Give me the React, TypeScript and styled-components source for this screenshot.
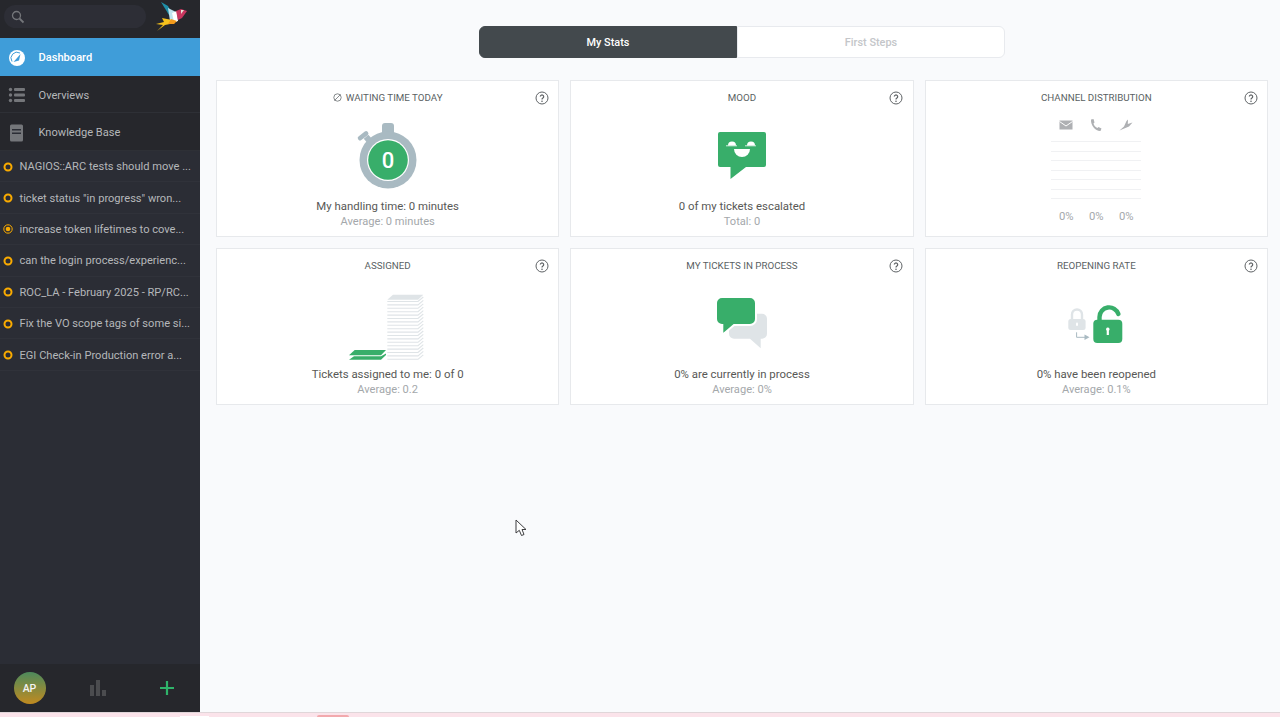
import React from "react";
import styled, { createGlobalStyle } from "styled-components";

const Global = createGlobalStyle`
  html, body { margin: 0; padding: 0; height: 717px; overflow: hidden; }
  body { font-family: "Roboto", "Noto Sans", sans-serif; font-size: 12px; }
  * { box-sizing: border-box; }
`;

const Page = styled.div`
  position: relative;
  width: 1280px;
  height: 717px;
  display: flex;
  flex-direction: column;
  overflow: hidden;
`;
const Body = styled.div`
  display: flex;
  height: 712px;
`;
const Strip = styled.div`
  position: relative;
  height: 5px;
  background: #fbe3ea;
  border-top: 1px solid #e0d6d9;
`;
const StripTabLight = styled.span`
  position: absolute;
  left: 180px;
  bottom: 0;
  width: 29px;
  height: 1px;
  background: #fff;
`;
const StripTabRed = styled.span`
  position: absolute;
  left: 317px;
  bottom: 0;
  width: 32px;
  height: 2px;
  border-radius: 2px 2px 0 0;
  background: #f2a9ad;
`;

const Sidebar = styled.aside`
  width: 200px;
  flex: none;
  display: flex;
  flex-direction: column;
  background: #2b2d35;
`;
const SearchRow = styled.div`
  height: 38px;
  flex: none;
  display: flex;
  align-items: flex-start;
  justify-content: space-between;
  background: #26272c;
  padding: 5px 13px 0 4px;
`;
const SearchBox = styled.div`
  width: 142px;
  height: 23px;
  border-radius: 12px;
  background: #2d2e36;
  display: flex;
  align-items: center;
  padding-left: 7px;
`;
const Logo = styled.svg`
  width: 32px;
  height: 30px;
  margin-top: -4px;
`;
const NavItem = styled.div<{ $active?: boolean; $h: number }>`
  height: ${(p) => p.$h}px;
  flex: none;
  display: flex;
  align-items: center;
  gap: 12.5px;
  padding: 2px 0 0 8px;
  font-size: 11.1px;
  font-weight: ${(p) => (p.$active ? 500 : 400)};
  color: ${(p) => (p.$active ? "#ffffff" : "#b5b7ba")};
  background: ${(p) => (p.$active ? "#3f9dd9" : "#26272c")};
  border-bottom: 1px solid ${(p) => (p.$active ? "#3f9dd9" : "#2e3036")};
`;
const NavIcon = styled.svg`
  width: 18px;
  height: 18px;
  flex: none;
`;
const TicketList = styled.div`
  flex: 1;
  display: flex;
  flex-direction: column;
`;
const TicketRow = styled.div`
  height: 31.4px;
  flex: none;
  display: flex;
  align-items: center;
  gap: 6.5px;
  padding: 1px 0 0 3px;
  border-bottom: 1px solid #30323a;
  color: #b5b7ba;
  font-size: 11.1px;
  white-space: nowrap;
  overflow: hidden;
`;
const TicketDot = styled.svg`
  width: 10px;
  height: 10px;
  flex: none;
`;
const SideFooter = styled.div`
  height: 48px;
  flex: none;
  background: #26272c;
  display: grid;
  grid-template-columns: 59px 77px 62px;
  align-items: center;
  justify-items: center;
`;
const Avatar = styled.div`
  width: 32px;
  height: 32px;
  border-radius: 50%;
  background: linear-gradient(180deg, #4d8a5c 0%, #c08a20 100%);
  color: #f4f4f4;
  font-size: 10.5px;
  font-weight: 500;
  display: flex;
  align-items: center;
  justify-content: center;
`;
const FootIcon = styled.svg`
  width: 18px;
  height: 18px;
`;

const Main = styled.main`
  flex: 1;
  background: #f9fafc;
  padding: 26px 12px 0 16px;
  display: flex;
  flex-direction: column;
  align-items: center;
`;
const Tabs = styled.div`
  width: 526px;
  height: 32px;
  display: grid;
  grid-template-columns: 258px 1fr;
  margin-bottom: 22px;
`;
const Tab = styled.div<{ $active?: boolean }>`
  display: flex;
  align-items: center;
  justify-content: center;
  font-size: 10.9px;
  font-weight: 500;
  color: ${(p) => (p.$active ? "#ffffff" : "#c4c6c9")};
  background: ${(p) => (p.$active ? "#43494d" : "#ffffff")};
  border: 1px solid ${(p) => (p.$active ? "#43494d" : "#e8eaee")};
  border-radius: ${(p) => (p.$active ? "6px 0 0 6px" : "0 6px 6px 0")};
`;
const Grid = styled.div`
  width: 100%;
  display: grid;
  grid-template-columns: repeat(3, 1fr);
  grid-auto-rows: 157px;
  gap: 11px;
`;
const Card = styled.section`
  position: relative;
  background: #fff;
  border: 1px solid #e7e9ec;
  display: flex;
  flex-direction: column;
  align-items: center;
  padding-bottom: 7px;
`;
const Title = styled.h3`
  margin: 0;
  height: 35px;
  padding-bottom: 2px;
  flex: none;
  display: flex;
  align-items: center;
  gap: 4px;
  font-size: 9.75px;
  font-weight: 400;
  color: #5a5f63;
  text-transform: uppercase;
`;
const Help = styled.svg`
  position: absolute;
  top: 9.5px;
  right: 9.5px;
  width: 14px;
  height: 14px;
`;
const Visual = styled.svg`
  width: 120px;
  height: 82px;
  flex: none;
`;
const Primary = styled.div`
  height: 16px;
  line-height: 16px;
  font-size: 11.4px;
  color: #585856;
`;
const Secondary = styled.div`
  height: 15px;
  line-height: 15px;
  font-size: 11.1px;
  color: #a4a8ab;
`;
const Channels = styled.div`
  width: 90px;
  height: 113px;
  padding-top: 1px;
  flex: none;
  display: flex;
  flex-direction: column;
`;
const ChannelRow = styled.div`
  display: grid;
  grid-template-columns: repeat(3, 30px);
  justify-items: center;
`;
const ChannelIcon = styled.svg`
  width: 16px;
  height: 16px;
`;
const Lines = styled.div`
  margin-top: 8px;
  height: 58px;
  display: flex;
  flex-direction: column;
  justify-content: space-between;
  margin-bottom: 10px;
`;
const Line = styled.div`
  height: 1px;
  background: #f0f1f3;
`;
const Percent = styled.div`
  font-size: 11.3px;
  line-height: 16px;
  color: #a4a8ab;
`;
const Cursor = styled.svg`
  position: absolute;
  left: 515px;
  top: 519px;
  width: 12px;
  height: 18px;
`;

const HelpIcon = () => (
  <Help viewBox="0 0 14 14">
    <circle cx="7" cy="7" r="6" fill="none" stroke="#5f6366" strokeWidth="1" />
    <path d="M5.3 5.6a1.7 1.7 0 1 1 2.6 1.5c-.6.4-.9.6-.9 1.3" fill="none" stroke="#5f6366" strokeWidth="1.2" />
    <circle cx="7" cy="10.2" r=".8" fill="#5f6366" />
  </Help>
);

const green = "#38ae6a";
const pale = "#dfe4e7";

const Stopwatch = () => (
  <Visual viewBox="0 0 120 82">
    <rect x="54" y="7" width="12" height="12" rx="3" fill="#a9bac2" />
    <rect x="29" y="17.5" width="12" height="4.6" rx="2" fill="#a9bac2" transform="rotate(-38 35 19.7)" />
    <rect x="37" y="20" width="6" height="6" fill="#a9bac2" transform="rotate(-40 40 23)" />
    <circle cx="60" cy="44" r="28.5" fill="#a9bac2" />
    <circle cx="60" cy="44" r="21" fill="#fff" />
    <circle cx="60" cy="44" r="19.8" fill={green} />
    <text x="60" y="51.5" textAnchor="middle" fontSize="22" fontWeight="500" fill="#fff" fontFamily="Roboto, sans-serif">0</text>
  </Visual>
);

const Mood = () => (
  <Visual viewBox="0 0 120 82">
    <path d="M38 16H82a2 2 0 0 1 2 2V49a2 2 0 0 1-2 2H64L48.500 63V51H38a2 2 0 0 1-2-2V18a2 2 0 0 1 2-2Z" fill={green} />
    <path d="M46 29.500a4 4 0 0 1 8 0Z M65 29.500a4 4 0 0 1 8 0Z" fill="#fff" />
    <path d="M44 29.800H55 M63 29.800H74" stroke="#fff" strokeWidth=".8" />
    <path d="M52 33H68a8 8 0 0 1-16 0Z" fill="#fff" />
  </Visual>
);

const sheets = Array.from({ length: 18 }, (_, i) => 17.5 + i * 3.4);

const Assigned = () => (
  <Visual viewBox="0 0 120 82">
    <polygon points="59.300,15.700 65,10.700 95.300,10.700 90,15.700" fill={pale} />
    {sheets.map((y) => (
      <path key={y} d={`M59.300 ${y}H90L95.300 ${y - 4.500}`} fill="none" stroke={pale} strokeWidth="1.100" />
    ))}
    <polygon points="21,71.300 26.700,66 58,66 53,71.300" fill={green} />
    <polygon points="21,75.700 26,72.200 28,72.200 28,72.300 53,72.300 58,69.500 58,71 53,75.700" fill={green} />
  </Visual>
);

const Process = () => (
  <Visual viewBox="0 0 120 82">
    <path d="M53 29.700H80a5 5 0 0 1 5 5V49.700a5 5 0 0 1-5 5H78.700V64.300L68 54.700H52a5 5 0 0 1-5-5V35a5 5 0 0 1 6-5.300Z" fill={pale} />
    <path d="M40 13H68a6 6 0 0 1 6 6V35a6 6 0 0 1-6 6H52L40.300 51V41H40a6 6 0 0 1-6-6V19a6 6 0 0 1 6-6Z" fill={green} stroke="#fff" strokeWidth="2" />
  </Visual>
);

const Reopen = () => (
  <Visual viewBox="0 0 120 82">
    <rect x="32.300" y="35" width="17.300" height="11" rx="2.500" fill={pale} />
    <path d="M36 36V30.500a5 5 0 0 1 10 0V36" fill="none" stroke={pale} strokeWidth="2.400" />
    <rect x="40" y="38.500" width="2" height="3.500" rx="1" fill="#fff" />
    <path d="M40.600 48.300V53.300H52" fill="none" stroke="#a9bac2" strokeWidth="1" />
    <path d="M48.500 50.500L53.500 53.300L48.500 56Z" fill="#a9bac2" />
    <rect x="57.300" y="35.700" width="29" height="23.300" rx="4" fill={green} />
    <path d="M63.500 38V33A9.700 9.700 0 0 1 82.400 30" fill="none" stroke={green} strokeWidth="4.400" strokeLinecap="round" />
    <path d="M71.800 43.500a1.800 1.800 0 0 1 1.100 3.200V51h-2.200v-4.300a1.800 1.800 0 0 1 1.100-3.200Z" fill="#fff" />
  </Visual>
);

const tickets = [
  "NAGIOS::ARC tests should move ...",
  'ticket status "in progress" wron...',
  "increase token lifetimes to cove...",
  "can the login process/experienc...",
  "ROC_LA - February 2025 - RP/RC...",
  "Fix the VO scope tags of some si...",
  "EGI Check-in Production error a...",
];

export default function App() {
  return (
    <>
      <Global />
      <Page>
        <Body>
          <Sidebar>
            <SearchRow>
              <SearchBox>
                <svg width="14" height="14" viewBox="0 0 14 14">
                  <circle cx="5.500" cy="5.500" r="4" fill="none" stroke="#74767a" strokeWidth="1.300" />
                  <path d="M8.500 8.500L12.500 12.500" stroke="#74767a" strokeWidth="1.800" />
                </svg>
              </SearchBox>
              <Logo viewBox="0 0 32 30">
                <polygon points="6,1 13,5 17,13 14,14" fill="#1f8fa8" />
                <polygon points="13,7 21,11 22,21 15,20" fill="#bfe3ee" />
                <polygon points="17,12 22,10 23,20 19,21" fill="#ffffff" />
                <polygon points="21,10 26,8 32,10 27,17 23,19" fill="#c8365f" />
                <polygon points="26,9 29,9 26,13" fill="#e8e4d8" />
                <polygon points="7,17 17,19 20,22 10,24 2,30 8,24 1,23 9,21" fill="#f6c21c" />
                <polygon points="16,18 22,20 19,23 13,23" fill="#f29a1c" />
              </Logo>
            </SearchRow>
            <NavItem $active $h={38}>
              <NavIcon viewBox="0 0 18 18">
                <circle cx="9" cy="9" r="8" fill="#fff" />
                <path d="M4 12.500A6 6 0 0 1 12 4" fill="none" stroke="#3f9dd9" strokeWidth="1" />
                <path d="M5.500 13L12.500 5 11 11.500Z" fill="#3f9dd9" />
              </NavIcon>
              Dashboard
            </NavItem>
            <NavItem $h={37}>
              <NavIcon viewBox="0 0 18 18">
                <g fill="#74767a">
                  <circle cx="2.500" cy="3.500" r="1.700" />
                  <circle cx="2.500" cy="9" r="1.700" />
                  <circle cx="2.500" cy="14.500" r="1.700" />
                  <rect x="6" y="2" width="11" height="3" rx="1" />
                  <rect x="6" y="7.500" width="11" height="3" rx="1" />
                  <rect x="6" y="13" width="11" height="3" rx="1" />
                </g>
              </NavIcon>
              Overviews
            </NavItem>
            <NavItem $h={38}>
              <NavIcon viewBox="0 0 18 18">
                <rect x="2" y="0.500" width="13" height="17" rx="1.500" fill="#74767a" />
                <rect x="4" y="5" width="9" height="1.500" fill="#2b2d35" />
                <rect x="4" y="8.500" width="9" height="1.500" fill="#2b2d35" />
              </NavIcon>
              Knowledge Base
            </NavItem>
            <TicketList>
              {tickets.map((t, i) => (
                <TicketRow key={t}>
                  <TicketDot viewBox="0 0 10 10">
                    {i === 2 ? (
                      <>
                        <circle cx="5" cy="5" r="4.200" fill="none" stroke="#faab00" strokeWidth="1" />
                        <circle cx="5" cy="5" r="2.300" fill="#faab00" />
                      </>
                    ) : (
                      <circle cx="5" cy="5" r="3.500" fill="none" stroke="#faab00" strokeWidth="2" />
                    )}
                  </TicketDot>
                  {t}
                </TicketRow>
              ))}
            </TicketList>
            <SideFooter>
              <Avatar>AP</Avatar>
              <FootIcon viewBox="0 0 18 18">
                <g fill="#4b4c4f">
                  <rect x="1" y="6" width="4" height="11" />
                  <rect x="7" y="1" width="4" height="16" />
                  <rect x="13" y="11" width="4" height="6" />
                </g>
              </FootIcon>
              <FootIcon viewBox="0 0 18 18">
                <path d="M9 2V16M2 9H16" stroke="#2fb36a" strokeWidth="2.200" />
              </FootIcon>
            </SideFooter>
          </Sidebar>
          <Main>
            <Tabs>
              <Tab $active>My Stats</Tab>
              <Tab>First Steps</Tab>
            </Tabs>
            <Grid>
              <Card>
                <Title>
                  <svg width="9" height="9" viewBox="0 0 9 9">
                    <circle cx="4.500" cy="4.500" r="3.700" fill="none" stroke="#6a6e71" strokeWidth=".8" />
                    <path d="M1.500 7.500L7.500 1.500" stroke="#6a6e71" strokeWidth=".8" />
                  </svg>
                  Waiting time today
                </Title>
                <HelpIcon />
                <Stopwatch />
                <Primary>My handling time: 0 minutes</Primary>
                <Secondary>Average: 0 minutes</Secondary>
              </Card>
              <Card>
                <Title>Mood</Title>
                <HelpIcon />
                <Mood />
                <Primary>0 of my tickets escalated</Primary>
                <Secondary>Total: 0</Secondary>
              </Card>
              <Card>
                <Title>Channel Distribution</Title>
                <HelpIcon />
                <Channels>
                  <ChannelRow>
                    <ChannelIcon viewBox="0 0 16 16">
                      <rect x="1.500" y="3.500" width="13" height="9" fill="#aeb0b3" />
                      <path d="M1.500 4.500L8 9L14.500 4.500" fill="none" stroke="#fff" strokeWidth="1" />
                    </ChannelIcon>
                    <ChannelIcon viewBox="0 0 16 16">
                      <path d="M3 2.500L5.500 2L6.500 5.500L5.500 6.500C6 8.500 7.500 10 9.500 11L10.500 10L13.500 11.500L12.500 14C8 14.500 2.500 8.500 3 2.500Z" fill="#aeb0b3" />
                    </ChannelIcon>
                    <ChannelIcon viewBox="0 0 16 16">
                      <path d="M1.500 13.500L6 9.500L8.500 4L10 2.500L9.800 7L14.500 5.500L11 9.500L5 12Z" fill="#aeb0b3" />
                    </ChannelIcon>
                  </ChannelRow>
                  <Lines>
                    {[0, 1, 2, 3, 4, 5, 6].map((n) => (
                      <Line key={n} />
                    ))}
                  </Lines>
                  <ChannelRow>
                    <Percent>0%</Percent>
                    <Percent>0%</Percent>
                    <Percent>0%</Percent>
                  </ChannelRow>
                </Channels>
              </Card>
              <Card>
                <Title>Assigned</Title>
                <HelpIcon />
                <Assigned />
                <Primary>Tickets assigned to me: 0 of 0</Primary>
                <Secondary>Average: 0.2</Secondary>
              </Card>
              <Card>
                <Title>My tickets in process</Title>
                <HelpIcon />
                <Process />
                <Primary>0% are currently in process</Primary>
                <Secondary>Average: 0%</Secondary>
              </Card>
              <Card>
                <Title>Reopening rate</Title>
                <HelpIcon />
                <Reopen />
                <Primary>0% have been reopened</Primary>
                <Secondary>Average: 0.1%</Secondary>
              </Card>
            </Grid>
          </Main>
        </Body>
        <Strip>
          <StripTabLight />
          <StripTabRed />
        </Strip>
        <Cursor viewBox="0 0 12 18">
          <path d="M1 1V14L4.300 11.300L6.500 16.500L9 15.500L7 10.500H11Z" fill="#fff" stroke="#3d3d40" strokeWidth="1" />
        </Cursor>
      </Page>
    </>
  );
}
